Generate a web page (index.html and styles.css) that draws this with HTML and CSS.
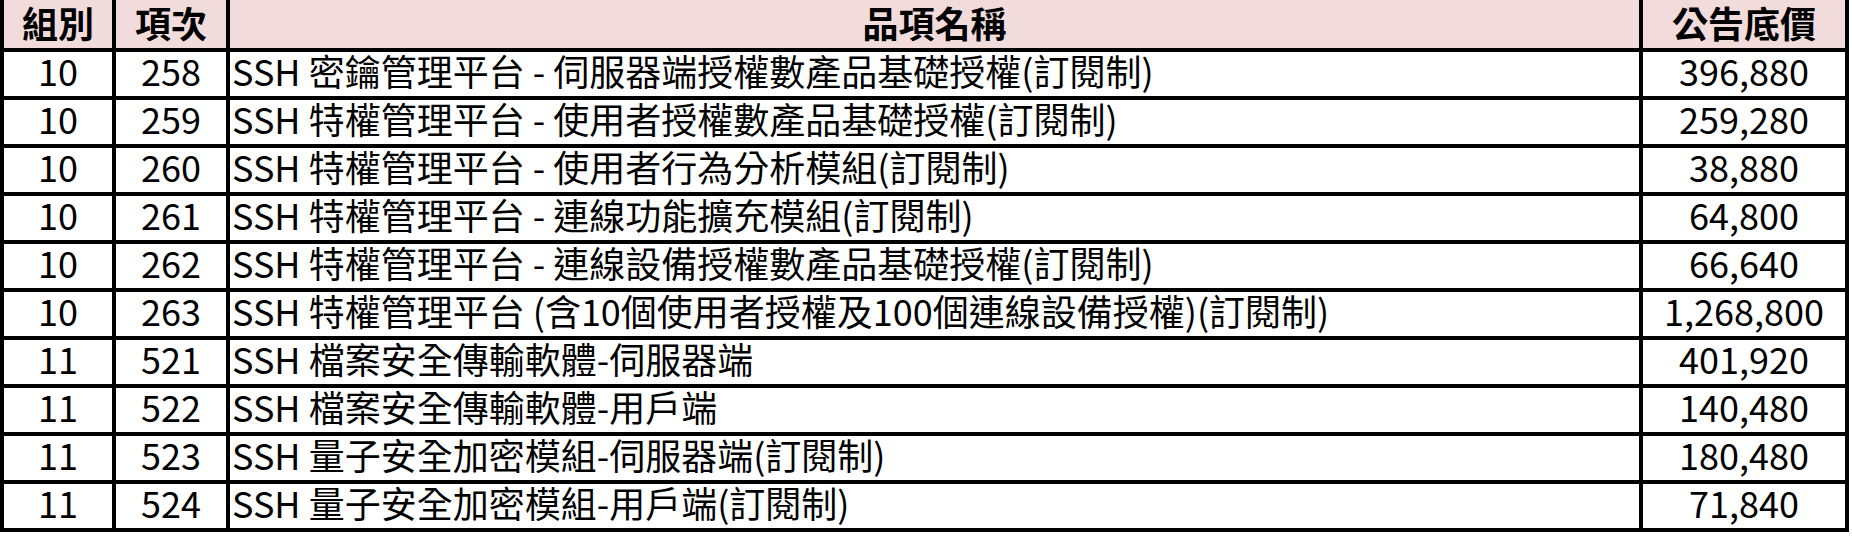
FILE: index.html
```html
<!DOCTYPE html>
<html lang="zh-Hant">
<head>
<meta charset="utf-8">
<title>品項底價表</title>
<link rel="stylesheet" href="styles.css">
</head>
<body>
<div class="sheet">
  <div class="cell head">組別</div>
  <div class="cell head">項次</div>
  <div class="cell head">品項名稱</div>
  <div class="cell head">公告底價</div>

  <div class="cell num">10</div><div class="cell num">258</div><div class="cell name">SSH 密鑰管理平台 - 伺服器端授權數產品基礎授權(訂閱制)</div><div class="cell num">396,880</div>
  <div class="cell num">10</div><div class="cell num">259</div><div class="cell name">SSH 特權管理平台 - 使用者授權數產品基礎授權(訂閱制)</div><div class="cell num">259,280</div>
  <div class="cell num">10</div><div class="cell num">260</div><div class="cell name">SSH 特權管理平台 - 使用者行為分析模組(訂閱制)</div><div class="cell num">38,880</div>
  <div class="cell num">10</div><div class="cell num">261</div><div class="cell name">SSH 特權管理平台 - 連線功能擴充模組(訂閱制)</div><div class="cell num">64,800</div>
  <div class="cell num">10</div><div class="cell num">262</div><div class="cell name">SSH 特權管理平台 - 連線設備授權數產品基礎授權(訂閱制)</div><div class="cell num">66,640</div>
  <div class="cell num">10</div><div class="cell num">263</div><div class="cell name">SSH 特權管理平台 (含10個使用者授權及100個連線設備授權)(訂閱制)</div><div class="cell num">1,268,800</div>
  <div class="cell num">11</div><div class="cell num">521</div><div class="cell name">SSH 檔案安全傳輸軟體-伺服器端</div><div class="cell num">401,920</div>
  <div class="cell num">11</div><div class="cell num">522</div><div class="cell name">SSH 檔案安全傳輸軟體-用戶端</div><div class="cell num">140,480</div>
  <div class="cell num">11</div><div class="cell num">523</div><div class="cell name">SSH 量子安全加密模組-伺服器端(訂閱制)</div><div class="cell num">180,480</div>
  <div class="cell num">11</div><div class="cell num">524</div><div class="cell name">SSH 量子安全加密模組-用戶端(訂閱制)</div><div class="cell num">71,840</div>
</div>
</body>
</html>
```

FILE: styles.css
```css
html, body {
  margin: 0;
  padding: 0;
  background: #ffffff;
}

.sheet {
  display: grid;
  grid-template-columns: 108px 110px 1409px 202px;
  grid-template-rows: 48px repeat(10, 44px);
  gap: 4px;
  padding: 0 4px 4px 4px;
  background: #000000;
  width: max-content;
  font-family: "Noto Sans CJK TC", "Noto Sans", sans-serif;
  color: #000000;
}

.cell {
  box-sizing: border-box;
  background: #ffffff;
  font-size: 36px;
  line-height: 36px;
  padding-bottom: 8px;
  white-space: nowrap;
}

.head {
  background: #f2dcdb;
  font-weight: 700;
  text-align: center;
  line-height: 40px;
  padding-top: 2px;
  padding-bottom: 6px;
}

.num {
  text-align: center;
}

.name {
  text-align: left;
  padding-left: 2px;
}
```
